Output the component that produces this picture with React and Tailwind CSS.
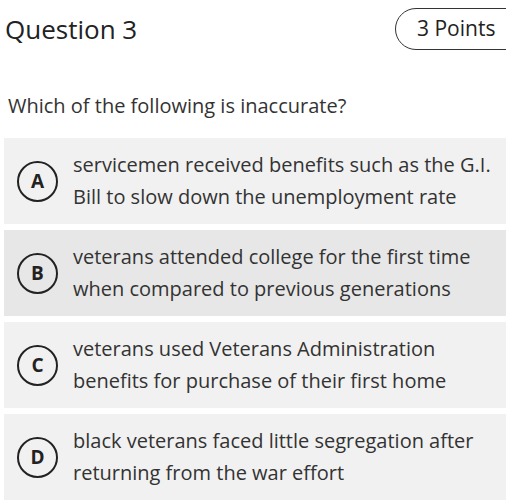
const options = [
  { key: 'A', text: ['servicemen received benefits such as the G.I.', 'Bill to slow down the unemployment rate'] },
  { key: 'B', text: ['veterans attended college for the first time', 'when compared to previous generations'], active: true },
  { key: 'C', text: ['veterans used Veterans Administration', 'benefits for purchase of their first home'] },
  { key: 'D', text: ['black veterans faced little segregation after', 'returning from the war effort'] },
]

export default function App() {
  return (
    <div className="h-[500px] w-full overflow-hidden bg-white text-[#2b2b2b]" style={{ fontFamily: '"Open Sans", sans-serif' }}>
      <div className="flex items-start justify-between pt-[8px]">
        <h1 className="pl-[5px] pt-[8px] text-[26px] leading-none font-normal text-[#222]">Question 3</h1>
        <div className="-mr-[40px] flex h-[42px] w-[151px] shrink-0 items-center rounded-full border-[1.5px] border-[#333] pl-[21px] text-[21px] text-[#222]">
          3 Points
        </div>
      </div>

      <p className="mt-[44px] pl-[8px] text-[20px] leading-[24px] text-[#333]">Which of the following is inaccurate?</p>

      <div className="mt-[20px] flex flex-col gap-[6px] pl-[4px]">
        {options.map((opt) => (
          <div
            key={opt.key}
            className={`flex h-[86px] shrink-0 items-center gap-[15px] pl-[13px] ${opt.active ? 'bg-[#e7e7e7]' : 'bg-[#f1f1f1]'}`}
          >
            <div className="flex h-[41px] w-[41px] shrink-0 items-center justify-center rounded-full border-[2.5px] border-[#222] text-[19px] font-bold text-[#222]">
              {opt.key}
            </div>
            <div className="text-[20px] leading-[32px] text-[#333]">
              {opt.text.map((line, i) => (
                <div key={i} className="whitespace-nowrap">{line}</div>
              ))}
            </div>
          </div>
        ))}
      </div>
    </div>
  )
}
